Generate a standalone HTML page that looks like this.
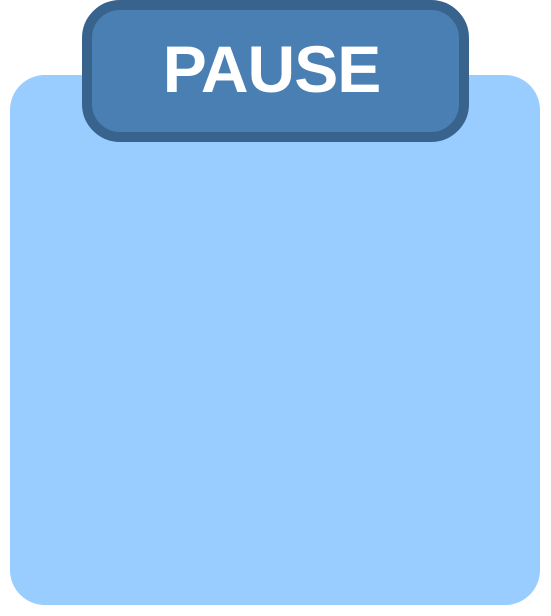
<!DOCTYPE html>
<html><head><style>
html,body{margin:0;padding:0;background:#fff;width:551px;height:616px;overflow:hidden}
.panel{position:absolute;left:10px;top:75px;width:530px;height:530px;background:#99ccff;border-radius:35px}
.hdr{position:absolute;left:82px;top:0;width:387px;height:142px;box-sizing:border-box;background:#4a7fb3;border:10px solid #38638d;border-radius:38px}
.t{position:absolute;left:-8px;right:0;top:34px;text-align:center;color:#fff;font-family:"Liberation Sans",sans-serif;font-weight:bold;font-size:66px;line-height:70px;letter-spacing:-1px}
</style></head><body>
<div class="panel"></div>
<div class="hdr"></div>
<div style="position:absolute;left:82px;top:0;width:387px;height:142px"><div class="t">PAUSE</div></div>
</body></html>
